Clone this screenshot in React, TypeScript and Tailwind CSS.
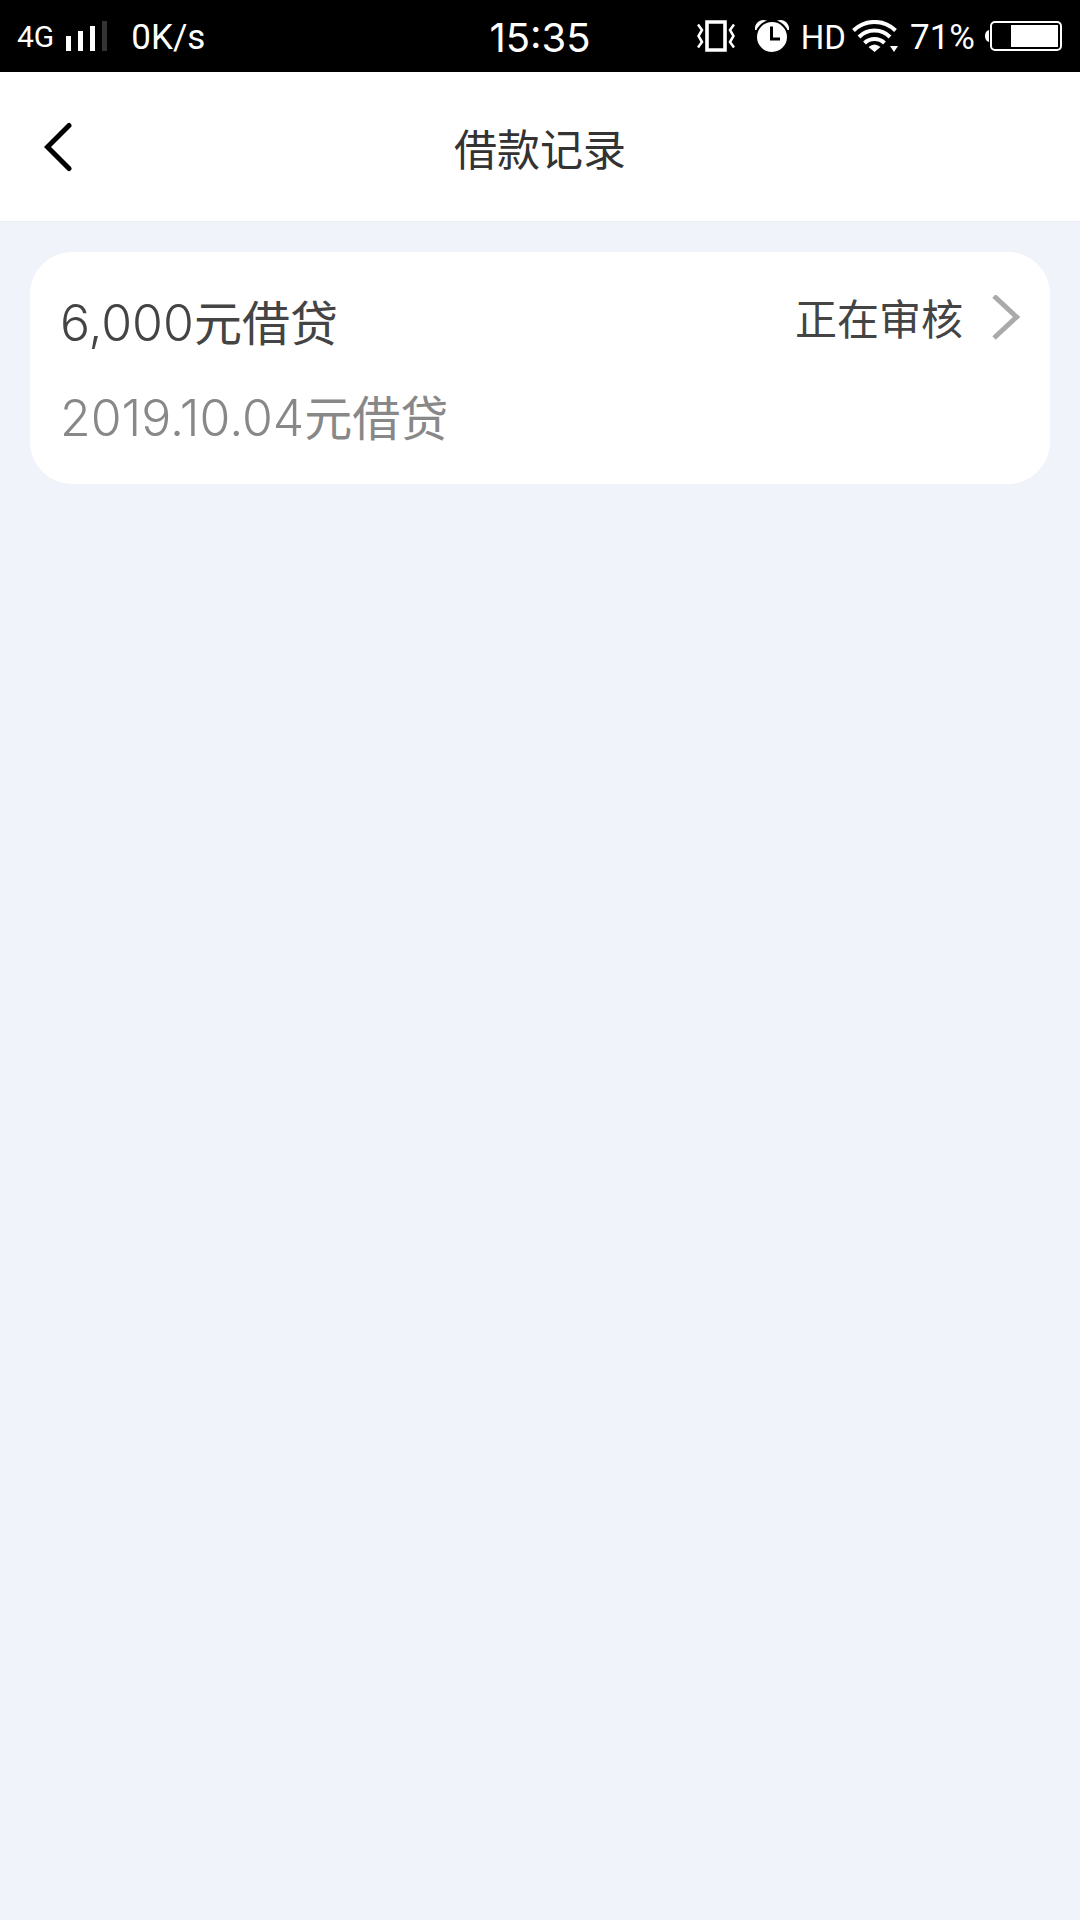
import { useState } from 'react';

const loans = [
  { id: 1, amount: '6,000', date: '2019.10.04', kind: '元借贷', status: '正在审核' },
];

function SignalIcon() {
  return (
    <svg width="41" height="30" viewBox="0 0 41 30" aria-hidden="true">
      <path d="M0 15h5v15H0zM12 10h5v20h-5zM24 5h5v25h-5z" fill="#fff" />
      <path d="M36 0h5v30h-5z" fill="#333" />
    </svg>
  );
}

function VibrateIcon() {
  return (
    <svg width="38" height="32" viewBox="0 0 38 32" fill="none" stroke="#fff" aria-hidden="true">
      <path d="M10 2h18v28H10z" strokeWidth="3.6" />
      <path d="M1 4.500l4 5.500-3.500 6 3.500 6-4 5.500M37 4.500l-4 5.500 3.500 6-3.500 6 4 5.500" strokeWidth="2.500" />
    </svg>
  );
}

function AlarmIcon() {
  return (
    <svg width="34" height="32" viewBox="0 0 34 32" aria-hidden="true">
      <path d="M0 10C-1 3 6 -2 12 .8L2 10zM34 10C35 3 28 -2 22 .8L32 10z" fill="#fff" />
      <circle cx="17" cy="17" r="16" fill="none" stroke="#000" strokeWidth="2" />
      <circle cx="17" cy="17" r="15" fill="#fff" />
      <path d="M16.500 6.500v12.500h8.500" stroke="#000" strokeWidth="3" fill="none" />
    </svg>
  );
}

function WifiIcon() {
  return (
    <svg width="46" height="32" viewBox="0 0 46 32" aria-hidden="true">
      <g fill="none" stroke="#fff" strokeWidth="4">
        <path d="M1.500 10.500a30 30 0 0 1 42 0" />
        <path d="M7 17a22 22 0 0 1 31 0" />
        <path d="M12.500 23a14.500 14.500 0 0 1 20 0" />
      </g>
      <path d="M16.500 27q6-5 12 0l-6 5zM38 26h8l-4 6z" fill="#fff" />
    </svg>
  );
}

function BatteryIcon() {
  return (
    <svg width="77" height="30" viewBox="0 0 77 30" aria-hidden="true">
      <path d="M4 9v12Q0 20 0 15t4-6z" fill="#fff" />
      <rect x="6" y="1" width="70" height="28" rx="4" fill="none" stroke="#fff" strokeWidth="2" />
      <path d="M26 4h47v22H26z" fill="#fff" />
    </svg>
  );
}

function StatusBar() {
  return (
    <div className="grid h-[72px] grid-cols-[1fr_auto_1fr] items-center bg-black font-[Roboto,sans-serif] text-white">
      <div className="flex items-center pl-[17px]">
        <span className="text-[30px]">4G</span>
        <span className="ml-3">
          <SignalIcon />
        </span>
        <span className="ml-6 pt-1 text-[35px]">0K/s</span>
      </div>
      <span className="pt-1 font-[Inter,sans-serif] text-[40px]">15:35</span>
      <div className="flex items-center justify-end pr-[18px]">
        <VibrateIcon />
        <span className="ml-5">
          <AlarmIcon />
        </span>
        <span className="ml-3 pt-1 text-[33px]">HD</span>
        <span className="ml-1.5">
          <WifiIcon />
        </span>
        <span className="ml-3 pt-1 text-[35px]">71%</span>
        <span className="ml-2.5">
          <BatteryIcon />
        </span>
      </div>
    </div>
  );
}

export default function App() {
  const [selected, setSelected] = useState<number | null>(null);

  return (
    <div lang="zh-CN" className="min-h-screen bg-[#f0f3fa] font-[Inter,'Noto_Sans_CJK_SC',sans-serif]">
      <StatusBar />

      <header className="grid h-[150px] grid-cols-[1fr_auto_1fr] items-center border-b border-[#e8ebf0] bg-white">
        <button type="button" aria-label="返回" className="ml-11 justify-self-start">
          <svg width="29" height="50" viewBox="0 0 29 50" fill="none" stroke="#000" strokeWidth="5" strokeLinecap="round">
            <path d="M25 3.500L3.500 25 25 46.500" />
          </svg>
        </button>
        <h1 className="pt-2 text-[43px] text-[#333]">借款记录</h1>
      </header>

      <main className="px-[30px] pt-[30px]">
        <ul className="flex flex-col gap-8">
          {loans.map((loan) => (
            <li key={loan.id}>
              <button
                type="button"
                aria-pressed={selected === loan.id}
                onClick={() => setSelected(loan.id)}
                className="flex w-full items-start justify-between rounded-[42px] bg-white px-[30px] pt-6 pb-[18px] text-left"
              >
                <span className="flex flex-col text-[48px] leading-[95px]">
                  <span className="text-[#444]">
                    <span className="text-[50px] font-light">{loan.amount}</span>
                    {loan.kind}
                  </span>
                  <span className="text-[#888]">
                    <span className="text-[50px] font-light">{loan.date}</span>
                    {loan.kind}
                  </span>
                </span>
                <span className="flex items-center gap-7 text-[42px] text-[#444]">
                  <span className="pt-1 leading-[80px]">{loan.status}</span>
                  <svg width="29" height="46" viewBox="0 0 29 46" fill="none" stroke="#aaa" strokeWidth="5" aria-hidden="true">
                    <path d="M3 1l22.500 21L3 43" />
                  </svg>
                </span>
              </button>
            </li>
          ))}
        </ul>
      </main>
    </div>
  );
}
